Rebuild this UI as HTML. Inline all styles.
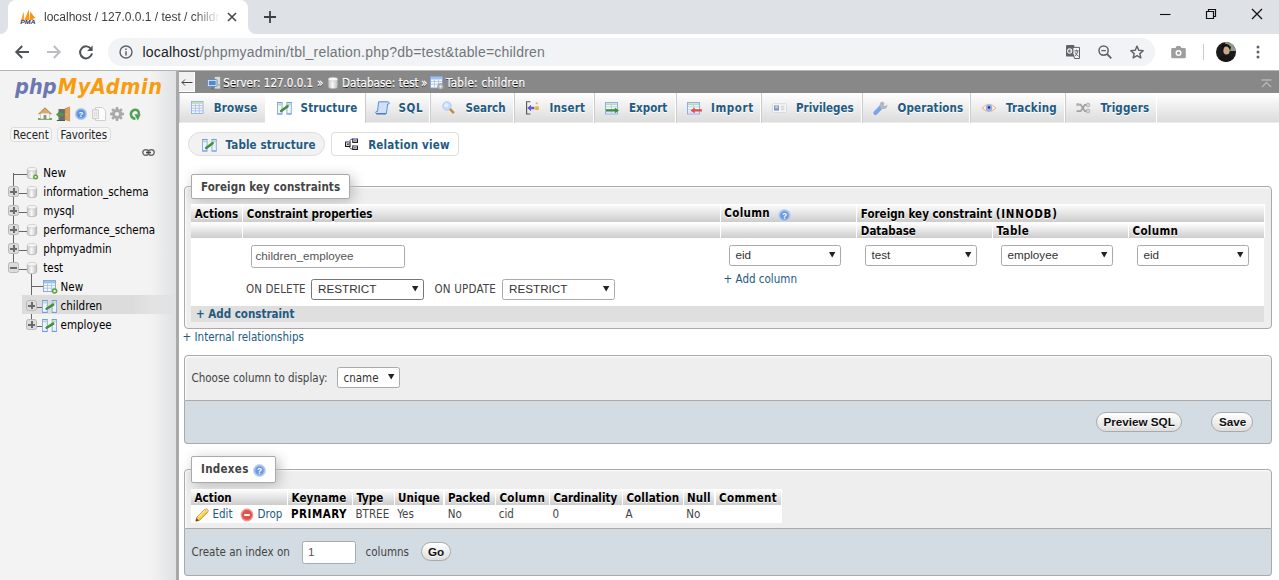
<!DOCTYPE html>
<html><head><meta charset="utf-8"><title>localhost / 127.0.0.1 / test / children | phpMyAdmin</title>
<style>
*{box-sizing:border-box}
html,body{margin:0;padding:0}
body{width:1279px;height:580px;overflow:hidden;position:relative;background:#fff;font-family:"DejaVu Sans Condensed","DejaVu Sans","Liberation Sans",sans-serif;font-size:11.5px;color:#444}
.a{position:absolute}
.t{position:absolute;white-space:nowrap;line-height:14px;height:14px}
.b{font-weight:bold}
.lk{color:#235a81}
.ar{font-family:"Liberation Sans",sans-serif;font-size:11.7px}
.ui{font-family:"Liberation Sans",sans-serif}
svg{position:absolute;overflow:visible}
/* chrome */
#strip{left:0;top:0;width:1279px;height:34px;background:#dee1e6}
#tab{left:8px;top:0;width:240px;height:34px;background:#fff;border-radius:8px 8px 0 0}
#bar{left:0;top:34px;width:1279px;height:36px;background:#fff}
#barline{left:0;top:70px;width:1279px;height:1px;background:#b4b4b4}
#pill{left:108px;top:38px;width:1047px;height:28px;border-radius:14px;background:#f1f3f4}
/* page */
#nav{left:0;top:71px;width:176px;height:509px;background:linear-gradient(90deg,#f3f3f3 0,#f3f3f3 150px,#dfe1e3 176px)}
#stripe{left:176px;top:71px;width:3px;height:509px;background:#a9a9a9}
#crumb{left:179px;top:71px;width:1100px;height:22px;background:#888}
#tabs{left:179px;top:93px;width:1100px;height:30px;background:linear-gradient(#fff,#dcdcdc 29px,#ededed 29px)}
.tb{position:absolute;top:93px;height:30px;border-right:1px solid #fff;border-left:1px solid #ccc}
.tbt{color:#235a81;font-weight:bold;text-shadow:0 1px 0 #fff}
.fs{position:absolute;background:#eee;border:1px solid #aaa;border-radius:4px;box-shadow:1px 1px 2px #fff inset}
.ft{position:absolute;background:#d3dce3;border:1px solid #aaa;border-top:0;border-radius:0 0 4px 4px}
.lg{position:absolute;background:#fff;border:1px solid #aaa;border-radius:2px;box-shadow:3px 3px 13px #bbb}
.th{position:absolute;background:linear-gradient(#fff,#ccc)}
.tht{color:#000;font-weight:bold;text-shadow:0 1px 0 #fff}
.sel{position:absolute;background:#fff;border:1px solid #aaa;border-radius:2.5px;height:21px}
.btn{position:absolute;border:1px solid #aaa;border-radius:11px;background:linear-gradient(#fff,#ddd);color:#111;font-weight:bold;text-shadow:0 1px 0 #fff}
</style></head>
<body>
<!-- ===== browser chrome ===== -->
<div id="strip" class="a"></div>
<div id="tab" class="a"></div>
<div id="bar" class="a"></div>
<div id="barline" class="a"></div>
<div id="pill" class="a"></div>
<!--CHROME--><svg style="left:0;top:26px" width="8" height="8"><path d="M0 8 A8 8 0 0 0 8 0 V8 Z" fill="#fff"/></svg>
<svg style="left:248px;top:26px" width="8" height="8"><path d="M8 8 A8 8 0 0 1 0 0 V8 Z" fill="#fff"/></svg>
<svg style="left:20px;top:9px" width="16" height="16" viewBox="0 0 16 16"><path d="M1 11 L3.6 2.5 L4.4 11 Z" fill="#f9a13a"/><path d="M4.6 11 L8.8 0.3 L9.6 11 Z" fill="#f89c0e"/><path d="M10 11 L10.2 2.2 C12 5 14 8 15.8 9 L13 9.4 L13.6 11 Z" fill="#f7901e"/><text x="0.2" y="15.3" font-family="Liberation Sans,sans-serif" font-size="5.6" font-weight="bold" font-style="italic" fill="#2b2f6e" textLength="15.4" lengthAdjust="spacingAndGlyphs">PMA</text></svg>
<div class="t ui" style="left:44px;top:10px;font-size:12px;color:#3c4043;width:176px;overflow:hidden;-webkit-mask-image:linear-gradient(90deg,#000 150px,transparent 176px);mask-image:linear-gradient(90deg,#000 150px,transparent 176px)">localhost / 127.0.0.1 / test / children | phpMyAdmin</div>
<svg style="left:226px;top:11px" width="12" height="12"><path d="M2 2 L10 10 M10 2 L2 10" stroke="#45474a" stroke-width="1.6" fill="none"/></svg>
<svg style="left:263px;top:10px" width="14" height="14"><path d="M7 1 V13 M1 7 H13" stroke="#3c4043" stroke-width="1.8" fill="none"/></svg>
<!-- window controls -->
<svg style="left:1160px;top:13px" width="11" height="3"><path d="M0 1.5 H10.5" stroke="#111" stroke-width="1.1"/></svg>
<svg style="left:1205px;top:8px" width="12" height="12"><path d="M1.5 3.5 H8.5 V10.5 H1.5 Z M3.5 3.5 V1.5 H10.5 V8.5 H8.5" stroke="#111" stroke-width="1.2" fill="none"/></svg>
<svg style="left:1251px;top:8px" width="12" height="12"><path d="M1 1 L11 11 M11 1 L1 11" stroke="#111" stroke-width="1.3" fill="none"/></svg>
<!-- nav buttons -->
<svg style="left:14px;top:44px" width="16" height="16"><path d="M15 8 H2.5 M8.2 2 L2.3 8 L8.2 14" stroke="#505458" stroke-width="2" fill="none"/></svg>
<svg style="left:46px;top:44px" width="16" height="16"><path d="M1 8 H13.5 M7.8 2 L13.7 8 L7.8 14" stroke="#bbbdc0" stroke-width="2" fill="none"/></svg>
<svg style="left:78px;top:44px" width="16" height="16"><path d="M13.2 5.2 A6 6 0 1 0 14 9.4" stroke="#505458" stroke-width="2" fill="none"/><path d="M14.6 1.6 V7 H9.2 Z" fill="#505458"/></svg>
<!-- info icon -->
<svg style="left:119px;top:45px" width="14" height="14"><circle cx="7" cy="7" r="6" stroke="#5f6368" stroke-width="1.4" fill="none"/><path d="M7 6.2 V10.4 M7 3.6 V5" stroke="#5f6368" stroke-width="1.5"/></svg>
<div class="t ui" style="left:142.5px;top:44px;font-size:14px;line-height:16px;height:16px;letter-spacing:0.21px;color:#72767b"><span style="color:#202124">localhost</span>/phpmyadmin/tbl_relation.php?db=test&amp;table=children</div>
<!-- right icons -->
<svg style="left:1066px;top:45px" width="14" height="14"><rect x="0" y="0" width="8.4" height="11.6" rx="1.2" fill="#5f6368"/><circle cx="3.7" cy="6" r="2.1" stroke="#eceef0" stroke-width="1.1" fill="none"/><path d="M3.7 6 H6.2" stroke="#eceef0" stroke-width="1"/><path d="M6.9 2.4 H13.5 V13.5 H8.6 L6.9 8.6 Z" fill="#f1f3f4" stroke="#5f6368" stroke-width="1"/><path d="M8.4 5.9 H12.5 M10.4 4.7 V5.9 M11.9 5.9 Q11 9.6 8.6 11.3 M9.2 7.4 Q10.4 10.2 12.6 11.3" stroke="#5f6368" stroke-width=".95" fill="none"/></svg>
<svg style="left:1098px;top:45px" width="14" height="14"><circle cx="5.6" cy="5.6" r="4.6" stroke="#5f6368" stroke-width="1.5" fill="none"/><path d="M9 9 L13.3 13.3" stroke="#5f6368" stroke-width="1.8"/><path d="M3.3 5.6 H7.9" stroke="#5f6368" stroke-width="1.3"/></svg>
<svg style="left:1129px;top:44px" width="16" height="16" viewBox="0 0 24 24"><path d="M12 3.2 L14.6 9.4 L21.3 10 L16.2 14.4 L17.8 21 L12 17.4 L6.2 21 L7.8 14.4 L2.7 10 L9.4 9.4 Z" stroke="#5f6368" stroke-width="2.1" fill="none" stroke-linejoin="round"/></svg>
<svg style="left:1171px;top:45px" width="15" height="14"><path d="M1.5 3 H4.5 L5.7 1 H9.3 L10.5 3 H13.5 Q14.8 3 14.8 4.3 V12 Q14.8 13.3 13.5 13.3 H1.5 Q0.2 13.3 0.2 12 V4.3 Q0.2 3 1.5 3 Z" fill="#9e9e9e"/><circle cx="7.5" cy="8" r="3" fill="#fff"/><circle cx="7.5" cy="8" r="1.6" fill="#9e9e9e"/></svg>
<div class="a" style="left:1203px;top:44px;width:1px;height:16px;background:#c8cacd"></div>
<svg style="left:1216px;top:42px" width="20" height="20"><defs><clipPath id="av"><circle cx="10" cy="10" r="10"/></clipPath></defs><g clip-path="url(#av)"><rect width="20" height="20" fill="#1d1b18"/><rect x="9" y="0" width="11" height="9" fill="#8c9a8f"/><ellipse cx="10.5" cy="8.5" rx="3.2" ry="4" fill="#c9a78c"/><path d="M5 4 Q10 -1 15 5 L14 9 Q13 4 10 4.5 Q7 4 7 10 Z" fill="#15120f"/><path d="M0 20 Q2 13 10 13.5 Q18 13 20 20 Z" fill="#161616"/></g></svg>
<svg style="left:1256px;top:45px" width="4" height="14"><circle cx="2" cy="2" r="1.5" fill="#5f6368"/><circle cx="2" cy="7" r="1.5" fill="#5f6368"/><circle cx="2" cy="12" r="1.5" fill="#5f6368"/></svg>
<!--/CHROME-->
<!-- ===== page ===== -->
<div id="nav" class="a"></div>
<div id="stripe" class="a"></div>
<div id="crumb" class="a"></div>
<div id="tabs" class="a"></div>
<!--NAV--><div class="t" style="left:15px;top:72.7px;font-size:21.5px;line-height:28px;height:28px;font-style:italic;font-weight:bold"><span style="color:#6c78af;letter-spacing:.1px">php</span><span style="color:#f89c0e;letter-spacing:.6px;margin-left:1px">MyAdmin</span></div>
<!-- nav icons -->
<svg style="left:38px;top:107px" width="14" height="13" viewBox="0 0 14 13"><path d="M0 11 H14 V13 H0 Z" fill="#6fb15a"/><path d="M2.5 6 H11.5 V12 H2.5 Z" fill="#f7f7f7" stroke="#b9b2a6" stroke-width=".6"/><path d="M5.6 8 H8.4 V12 H5.6 Z" fill="#8d8d8d"/><path d="M7 0.3 L14 7 L12.6 7.6 L7 2.6 L1.4 7.6 L0 7 Z" fill="#c18b4b"/><path d="M7 1.6 L12 6.2 H2 Z" fill="#d9a86c"/></svg>
<svg style="left:56px;top:107px" width="14" height="14" viewBox="0 0 14 14"><path d="M2.5 2 H9 V13 H2.5 Z" fill="#6d6d6d"/><path d="M0.8 13 H9 V14 H0.8 Z" fill="#555"/><path d="M9 1.6 L13.6 0 V14 L9 12.6 Z" fill="#d9a25c" stroke="#b97f3d" stroke-width=".6"/><circle cx="10.3" cy="7.6" r=".7" fill="#f4d27a"/><path d="M0 7.5 L3.8 4 V6 H7.5 V9 H3.8 V11 Z" fill="#4e9a4b"/></svg>
<svg style="left:75px;top:108px" width="12" height="12" viewBox="0 0 12 12"><circle cx="6" cy="6" r="5.7" fill="#8fb3e8" stroke="#bcd1f1" stroke-width=".9"/><circle cx="6" cy="6" r="3.9" fill="#5e8fd8"/><text x="3.6" y="8.9" font-family="Liberation Sans,sans-serif" font-size="8" font-weight="bold" fill="#fff">?</text></svg>
<svg style="left:92px;top:107px" width="14" height="14" viewBox="0 0 14 14"><path d="M3.5 0.5 H10.5 L13.5 3.5 V13.5 H3.5 Z" fill="#fcfcfc" stroke="#c9c9c9" stroke-width=".9"/><path d="M0.6 2.8 H6.4 V11.6 H0.6 Z" fill="#f4f4f4" stroke="#c4c4c4" stroke-width=".9"/><path d="M2.6 4.5 V10 M4.3 4.5 V10" stroke="#d2d2d2" stroke-width=".8"/></svg>
<svg style="left:110px;top:107px" width="14" height="14" viewBox="0 0 14 14"><g fill="#a9a9a9"><circle cx="7" cy="7" r="4.9"/><g id="gt"><rect x="5.6" y="0" width="2.8" height="14" rx=".8"/></g><use href="#gt" transform="rotate(45 7 7)"/><use href="#gt" transform="rotate(90 7 7)"/><use href="#gt" transform="rotate(135 7 7)"/></g><circle cx="7" cy="7" r="2.1" fill="#f0f0f0"/></svg>
<svg style="left:129px;top:108px" width="12" height="13" viewBox="0 0 12 13"><path d="M8.8 2.6 A4.4 4.4 0 1 0 6.4 10.6" stroke="#4fa052" stroke-width="2.6" fill="none"/><path d="M5.4 6.2 H11.8 L8.8 12.6 Z" fill="#4fa052"/><path d="M8.6 2.4 Q10.4 4 9.6 6.4" stroke="#4fa052" stroke-width="2.4" fill="none"/></svg>
<!-- recent / favorites -->
<div class="a" style="left:9.5px;top:127px;width:42.5px;height:15px;border:1px solid #ddd;border-radius:4px;background:#f6f6f6"></div>
<div class="a" style="left:56.5px;top:127px;width:54px;height:15px;border:1px solid #ddd;border-radius:4px;background:#f6f6f6"></div>
<div class="t" style="left:13px;top:128px;color:#222">Recent</div>
<div class="t" style="left:60.5px;top:128px;color:#222">Favorites</div>
<!-- link icon -->
<svg style="left:142px;top:149px" width="13" height="7" viewBox="0 0 13 7"><rect x=".8" y=".8" width="6" height="5.4" rx="2.7" fill="none" stroke="#6a6a6a" stroke-width="1.4"/><rect x="6.2" y=".8" width="6" height="5.4" rx="2.7" fill="none" stroke="#6a6a6a" stroke-width="1.4"/><path d="M4 3.5 H9" stroke="#444" stroke-width="1.5"/></svg>
<!-- tree lines -->
<div class="a" style="left:13px;top:173px;width:1px;height:95px;background:#666"></div>
<div class="a" style="left:13px;top:174px;width:14px;height:1px;background:#666"></div>
<div class="a" style="left:31px;top:273px;width:1px;height:52px;background:#666"></div>
<div class="a" style="left:31px;top:286px;width:12px;height:1px;background:#666"></div>
<div class="a" style="left:22px;top:295px;width:151px;height:19px;background:linear-gradient(90deg,#dcdcdc,#dcdcdc 110px,rgba(220,220,220,.35))"></div>
<svg style="left:27px;top:167px" width="10" height="12" viewBox="0 0 10 12"><defs><linearGradient id="cy" x1="0" x2="1"><stop offset="0" stop-color="#c6c6c6"/><stop offset=".45" stop-color="#f8f8f8"/><stop offset="1" stop-color="#bcbcbc"/></linearGradient></defs><path d="M0.4 2.2 V9.8 A4.6 1.9 0 0 0 9.6 9.8 V2.2 Z" fill="url(#cy)" stroke="#adadad" stroke-width=".7"/><ellipse cx="5" cy="2.2" rx="4.6" ry="1.9" fill="#f4f4f4" stroke="#bdbdbd" stroke-width=".6"/><circle cx="8.6" cy="10" r="2.5" fill="#5da13a"/><circle cx="8.6" cy="10" r="1.1" fill="#e9f6d8"/></svg>
<div class="t" style="left:43.3px;top:165.5px;color:#000">New</div>
<div class="a" style="left:8px;top:186px;width:11px;height:11px;background:#dcdcdc;border:1px solid #b8b8b8;border-radius:2.5px"></div><div class="a" style="left:10px;top:190.5px;width:7px;height:2px;background:#6a6a6a"></div><div class="a" style="left:12.5px;top:188px;width:2px;height:7px;background:#6a6a6a"></div>
<div class="a" style="left:19px;top:193px;width:8px;height:1px;background:#666"></div>
<svg style="left:27px;top:186px" width="10" height="12" viewBox="0 0 10 12"><defs><linearGradient id="cy" x1="0" x2="1"><stop offset="0" stop-color="#c6c6c6"/><stop offset=".45" stop-color="#f8f8f8"/><stop offset="1" stop-color="#bcbcbc"/></linearGradient></defs><path d="M0.4 2.2 V9.8 A4.6 1.9 0 0 0 9.6 9.8 V2.2 Z" fill="url(#cy)" stroke="#adadad" stroke-width=".7"/><ellipse cx="5" cy="2.2" rx="4.6" ry="1.9" fill="#f4f4f4" stroke="#bdbdbd" stroke-width=".6"/></svg>
<div class="t" style="left:43.3px;top:184.5px;color:#000">information_schema</div>
<div class="a" style="left:8px;top:205px;width:11px;height:11px;background:#dcdcdc;border:1px solid #b8b8b8;border-radius:2.5px"></div><div class="a" style="left:10px;top:209.5px;width:7px;height:2px;background:#6a6a6a"></div><div class="a" style="left:12.5px;top:207px;width:2px;height:7px;background:#6a6a6a"></div>
<div class="a" style="left:19px;top:212px;width:8px;height:1px;background:#666"></div>
<svg style="left:27px;top:205px" width="10" height="12" viewBox="0 0 10 12"><defs><linearGradient id="cy" x1="0" x2="1"><stop offset="0" stop-color="#c6c6c6"/><stop offset=".45" stop-color="#f8f8f8"/><stop offset="1" stop-color="#bcbcbc"/></linearGradient></defs><path d="M0.4 2.2 V9.8 A4.6 1.9 0 0 0 9.6 9.8 V2.2 Z" fill="url(#cy)" stroke="#adadad" stroke-width=".7"/><ellipse cx="5" cy="2.2" rx="4.6" ry="1.9" fill="#f4f4f4" stroke="#bdbdbd" stroke-width=".6"/></svg>
<div class="t" style="left:43.3px;top:203.5px;color:#000">mysql</div>
<div class="a" style="left:8px;top:224px;width:11px;height:11px;background:#dcdcdc;border:1px solid #b8b8b8;border-radius:2.5px"></div><div class="a" style="left:10px;top:228.5px;width:7px;height:2px;background:#6a6a6a"></div><div class="a" style="left:12.5px;top:226px;width:2px;height:7px;background:#6a6a6a"></div>
<div class="a" style="left:19px;top:231px;width:8px;height:1px;background:#666"></div>
<svg style="left:27px;top:224px" width="10" height="12" viewBox="0 0 10 12"><defs><linearGradient id="cy" x1="0" x2="1"><stop offset="0" stop-color="#c6c6c6"/><stop offset=".45" stop-color="#f8f8f8"/><stop offset="1" stop-color="#bcbcbc"/></linearGradient></defs><path d="M0.4 2.2 V9.8 A4.6 1.9 0 0 0 9.6 9.8 V2.2 Z" fill="url(#cy)" stroke="#adadad" stroke-width=".7"/><ellipse cx="5" cy="2.2" rx="4.6" ry="1.9" fill="#f4f4f4" stroke="#bdbdbd" stroke-width=".6"/></svg>
<div class="t" style="left:43.3px;top:222.5px;color:#000">performance_schema</div>
<div class="a" style="left:8px;top:243px;width:11px;height:11px;background:#dcdcdc;border:1px solid #b8b8b8;border-radius:2.5px"></div><div class="a" style="left:10px;top:247.5px;width:7px;height:2px;background:#6a6a6a"></div><div class="a" style="left:12.5px;top:245px;width:2px;height:7px;background:#6a6a6a"></div>
<div class="a" style="left:19px;top:250px;width:8px;height:1px;background:#666"></div>
<svg style="left:27px;top:243px" width="10" height="12" viewBox="0 0 10 12"><defs><linearGradient id="cy" x1="0" x2="1"><stop offset="0" stop-color="#c6c6c6"/><stop offset=".45" stop-color="#f8f8f8"/><stop offset="1" stop-color="#bcbcbc"/></linearGradient></defs><path d="M0.4 2.2 V9.8 A4.6 1.9 0 0 0 9.6 9.8 V2.2 Z" fill="url(#cy)" stroke="#adadad" stroke-width=".7"/><ellipse cx="5" cy="2.2" rx="4.6" ry="1.9" fill="#f4f4f4" stroke="#bdbdbd" stroke-width=".6"/></svg>
<div class="t" style="left:43.3px;top:241.5px;color:#000">phpmyadmin</div>
<div class="a" style="left:8px;top:262px;width:11px;height:11px;background:#dcdcdc;border:1px solid #b8b8b8;border-radius:2.5px"></div><div class="a" style="left:10px;top:266.5px;width:7px;height:2px;background:#6a6a6a"></div>
<div class="a" style="left:19px;top:269px;width:8px;height:1px;background:#666"></div>
<svg style="left:27px;top:262px" width="10" height="12" viewBox="0 0 10 12"><defs><linearGradient id="cy" x1="0" x2="1"><stop offset="0" stop-color="#c6c6c6"/><stop offset=".45" stop-color="#f8f8f8"/><stop offset="1" stop-color="#bcbcbc"/></linearGradient></defs><path d="M0.4 2.2 V9.8 A4.6 1.9 0 0 0 9.6 9.8 V2.2 Z" fill="url(#cy)" stroke="#adadad" stroke-width=".7"/><ellipse cx="5" cy="2.2" rx="4.6" ry="1.9" fill="#f4f4f4" stroke="#bdbdbd" stroke-width=".6"/></svg>
<div class="t" style="left:43.3px;top:260.5px;color:#000">test</div>
<svg style="left:43px;top:280px" width="15" height="14" viewBox="0 0 15 14"><rect x=".5" y=".5" width="12" height="11" fill="#f4f8fd" stroke="#7fa3dd" stroke-width=".9"/><path d="M1 2.2 H12" stroke="#9fc1ee" stroke-width="2.4"/><path d="M1 5.5 H12 M1 8.2 H12 M4.5 3.5 V11 M8.5 3.5 V11" stroke="#a9c0e6" stroke-width=".8"/><circle cx="11.6" cy="11" r="2.8" fill="#5da13a"/><circle cx="11.6" cy="11" r="1.2" fill="#e9f6d8"/></svg>
<div class="t" style="left:60.6px;top:279.5px;color:#000">New</div>
<div class="a" style="left:26px;top:300px;width:11px;height:11px;background:#dcdcdc;border:1px solid #b8b8b8;border-radius:2.5px"></div><div class="a" style="left:28px;top:304.5px;width:7px;height:2px;background:#6a6a6a"></div><div class="a" style="left:30.5px;top:302px;width:2px;height:7px;background:#6a6a6a"></div>
<div class="a" style="left:37px;top:306.5px;width:5px;height:1px;background:#666"></div>
<svg style="left:42px;top:299.5px" width="15" height="13" viewBox="0 0 15 13"><rect x=".5" y=".5" width="4.8" height="12" fill="#e6eefb" stroke="#86a9e2" stroke-width=".9"/><rect x="10.1" y=".5" width="4.4" height="12" fill="#e6eefb" stroke="#86a9e2" stroke-width=".9"/><path d="M.4 .6 H5.4 M10 .6 H14.6 M.4 12.4 H5.4 M10 12.4 H14.6" stroke="#6b98dc" stroke-width=".9"/><path d="M1.2 2.4 H4.6 M10.8 2.4 H13.8" stroke="#b4dc9c" stroke-width="1.5"/><path d="M1.4 5 H4.4 M1.4 7.5 H4.4 M1.4 10 H4.4 M11 5 H13.6 M11 7.5 H13.6 M11 10 H13.6" stroke="#fff" stroke-width=".9"/><path d="M4.6 8.8 L11.2 4.6" stroke="#3f9038" stroke-width="2.5" stroke-linecap="round"/></svg>
<div class="t" style="left:60.6px;top:298.5px;color:#000">children</div>
<div class="a" style="left:26px;top:319px;width:11px;height:11px;background:#dcdcdc;border:1px solid #b8b8b8;border-radius:2.5px"></div><div class="a" style="left:28px;top:323.5px;width:7px;height:2px;background:#6a6a6a"></div><div class="a" style="left:30.5px;top:321px;width:2px;height:7px;background:#6a6a6a"></div>
<div class="a" style="left:37px;top:325.5px;width:5px;height:1px;background:#666"></div>
<svg style="left:42px;top:318.5px" width="15" height="13" viewBox="0 0 15 13"><rect x=".5" y=".5" width="4.8" height="12" fill="#e6eefb" stroke="#86a9e2" stroke-width=".9"/><rect x="10.1" y=".5" width="4.4" height="12" fill="#e6eefb" stroke="#86a9e2" stroke-width=".9"/><path d="M.4 .6 H5.4 M10 .6 H14.6 M.4 12.4 H5.4 M10 12.4 H14.6" stroke="#6b98dc" stroke-width=".9"/><path d="M1.2 2.4 H4.6 M10.8 2.4 H13.8" stroke="#b4dc9c" stroke-width="1.5"/><path d="M1.4 5 H4.4 M1.4 7.5 H4.4 M1.4 10 H4.4 M11 5 H13.6 M11 7.5 H13.6 M11 10 H13.6" stroke="#fff" stroke-width=".9"/><path d="M4.6 8.8 L11.2 4.6" stroke="#3f9038" stroke-width="2.5" stroke-linecap="round"/></svg>
<div class="t" style="left:60.6px;top:317.5px;color:#000">employee</div>
<!--/NAV-->
<!--TOP--><div class="a" style="left:179px;top:72px;width:16px;height:20px;background:#f0f0f0;border-right:1px solid #fff;border-bottom:1px solid #fff"></div>
<svg style="left:181px;top:78px" width="12" height="9"><path d="M0.8 4.5 H11.5 M4 1.5 L1 4.5 L4 7.5" stroke="#444" stroke-width="1" fill="none"/></svg>
<svg style="left:1261px;top:79px" width="11" height="9"><path d="M0.5 1 H10.5 M1 8 L5.5 3.6 L10 8" stroke="#b5b5b5" stroke-width="1.4" fill="none"/></svg>
<svg style="left:207px;top:76px" width="14" height="14" viewBox="0 0 14 14"><rect x="7.5" y="0.5" width="6" height="12.5" fill="#d8d8d8" stroke="#8e8e8e" stroke-width=".8"/><circle cx="12" cy="9" r=".8" fill="#5cb85c"/><rect x=".5" y="3.5" width="9.5" height="7" rx=".8" fill="#dfe9f7" stroke="#6c86b5" stroke-width=".9"/><rect x="1.8" y="4.8" width="6.9" height="4.4" fill="#4f8ad6"/><path d="M3.6 12.8 H7 M5.3 10.5 V12.8" stroke="#777" stroke-width="1.2"/></svg>
<div class="t" style="left:223.3px;top:75.5px;color:#fff;text-shadow:0 1px 0 #000;-webkit-text-stroke:.25px #fff">Server: 127.0.0.1</div>
<div class="t" style="left:317px;top:75.5px;color:#fff;text-shadow:0 1px 0 #000;-webkit-text-stroke:.25px #fff">»</div>
<svg style="left:328px;top:77px" width="10" height="12" viewBox="0 0 10 12"><path d="M0.4 2.2 V9.8 A4.6 1.9 0 0 0 9.6 9.8 V2.2 Z" fill="url(#cy)" stroke="#aaa" stroke-width=".6"/><ellipse cx="5" cy="2.2" rx="4.6" ry="1.9" fill="#f8f8f8" stroke="#bbb" stroke-width=".6"/></svg>
<div class="t" style="left:342px;top:75.5px;color:#fff;text-shadow:0 1px 0 #000;-webkit-text-stroke:.25px #fff;letter-spacing:.05px">Database: test</div>
<div class="t" style="left:421px;top:75.5px;color:#fff;text-shadow:0 1px 0 #000;-webkit-text-stroke:.25px #fff">»</div>
<svg style="left:430px;top:76px" width="14" height="14" viewBox="0 0 14 14"><rect x=".5" y=".5" width="12" height="11.5" fill="#f4f8fd" stroke="#7fa3dd" stroke-width=".9"/><path d="M1 2.2 H12" stroke="#9fc1ee" stroke-width="2.4"/><path d="M1 5.5 H12 M1 8.2 H12 M4.5 3.5 V11 M8.5 3.5 V11" stroke="#a9c0e6" stroke-width=".8"/><circle cx="10.6" cy="10.6" r="3" fill="#bdbdbd" stroke="#8a8a8a" stroke-width=".7"/><circle cx="10.6" cy="10.6" r="1" fill="#f2f2f2"/></svg>
<div class="t" style="left:446px;top:75.5px;color:#fff;text-shadow:0 1px 0 #000;-webkit-text-stroke:.25px #fff;letter-spacing:.3px">Table: children</div>
<div class="tb" style="left:179px;width:86px; border-right:0;"></div>
<svg style="left:191px;top:101px" width="15" height="14" viewBox="0 0 15 14"><rect x=".5" y=".5" width="11.5" height="12" fill="#f4f8fd" stroke="#8fb0e4" stroke-width=".9"/><path d="M1 2 H11.5" stroke="#b7dba0" stroke-width="1.6"/><path d="M1 4.6 H11.5 M1 7.2 H11.5 M1 9.8 H11.5 M4.4 3 V12 M8.2 3 V12" stroke="#a9c0e6" stroke-width=".9"/></svg>
<div class="t tbt" style="left:213.8px;top:100.5px;letter-spacing:0.12px">Browse</div>
<div class="tb" style="left:265px;width:100px; background:#fff;height:30px;border-left-color:#fff;"></div>
<svg style="left:277px;top:101px" width="15" height="14" viewBox="0 0 15 14"><rect x=".5" y="1.5" width="4.6" height="11.5" fill="#e6eefb" stroke="#86a9e2" stroke-width=".9"/><rect x="9.9" y="1.5" width="4.4" height="11.5" fill="#e6eefb" stroke="#86a9e2" stroke-width=".9"/><path d="M.4 1.6 H5.2 M9.8 1.6 H14.4 M.4 13 H5.2 M9.8 13 H14.4" stroke="#6b98dc" stroke-width=".9"/><path d="M1.2 3.4 H4.4 M10.6 3.4 H13.6" stroke="#b4dc9c" stroke-width="1.5"/><path d="M1.4 6 H4.2 M1.4 8.4 H4.2 M1.4 10.8 H4.2 M10.8 6 H13.4 M10.8 8.4 H13.4 M10.8 10.8 H13.4" stroke="#fff" stroke-width=".9"/><path d="M4.2 10 L10.6 5.2" stroke="#3f9038" stroke-width="2.6" stroke-linecap="round"/></svg>
<div class="t tbt" style="left:300.6px;top:100.5px;letter-spacing:0.14px">Structure</div>
<div class="tb" style="left:365px;width:65px;"></div>
<svg style="left:375px;top:101px" width="15" height="14" viewBox="0 0 15 14"><path d="M3.6 .8 H13.4 Q14.6 1.2 14 3 H12.6 Q12.2 7 11.4 12.6 H1.2 Q.2 12 1 10.6 H2.4 Q3.2 6 3.6 .8 Z" fill="#cfe0f7" stroke="#5b8ed6" stroke-width="1"/><path d="M1.4 12.9 H11" stroke="#3f6fbd" stroke-width="1.1"/></svg>
<div class="t tbt" style="left:398.5px;top:100.5px;letter-spacing:0.6px">SQL</div>
<div class="tb" style="left:430px;width:84px;"></div>
<svg style="left:442px;top:101px" width="15" height="14" viewBox="0 0 15 14"><circle cx="5" cy="5" r="4.2" fill="#c6ddf8" stroke="#b4cdee" stroke-width="1"/><circle cx="4.4" cy="4.2" r="2" fill="#e3effc"/><path d="M8.6 8.6 L11.2 11.4" stroke="#c78a45" stroke-width="2.6" stroke-linecap="round"/></svg>
<div class="t tbt" style="left:465.5px;top:100.5px;letter-spacing:0px">Search</div>
<div class="tb" style="left:514px;width:80px;"></div>
<svg style="left:525px;top:101px" width="15" height="14" viewBox="0 0 15 14"><path d="M1 .8 H5.4 M1 13 H5.4 M1.6 .8 V13" stroke="#555" stroke-width="1.1" fill="none"/><path d="M2.2 7 L6 3.8 V5.8 H9.4 V8.2 H6 V10.2 Z" fill="#6a5acd"/><rect x="10.2" y="5.4" width="3.6" height="3.6" fill="#e8b33a"/><rect x="10.8" y="1.4" width="1.8" height="1.8" fill="#e8b33a"/></svg>
<div class="t tbt" style="left:549.5px;top:100.5px;letter-spacing:0.2px">Insert</div>
<div class="tb" style="left:594px;width:82px;"></div>
<svg style="left:605px;top:101px" width="15" height="14" viewBox="0 0 15 14"><rect x=".5" y="1.5" width="12" height="11.5" fill="#f4f8fd" stroke="#86a9e2" stroke-width=".9"/><path d="M1 3.2 H12" stroke="#b9dca6" stroke-width="1.8"/><path d="M1 5.8 H12 M1 8.6 H12 M1 11 H12 M6.5 4 V12.5" stroke="#b4c8ea" stroke-width=".8"/><path d="M1 8.2 H9.8 V6.6 L14 9.4 L9.8 12.2 V10.6 H1 Z" fill="#3f8f3a"/></svg>
<div class="t tbt" style="left:629px;top:100.5px;letter-spacing:0px">Export</div>
<div class="tb" style="left:676px;width:85px;"></div>
<svg style="left:687px;top:101px" width="15" height="14" viewBox="0 0 15 14"><rect x=".5" y="1.5" width="12" height="11.5" fill="#f4f8fd" stroke="#86a9e2" stroke-width=".9"/><path d="M1 3.2 H12" stroke="#b9dca6" stroke-width="1.8"/><path d="M1 5.8 H12 M1 8.6 H12 M1 11 H12 M6.5 4 V12.5" stroke="#b4c8ea" stroke-width=".8"/><path d="M15 8.2 H7.8 V6.6 L3.4 9.4 L7.8 12.2 V10.6 H15 Z" fill="#e84c42"/></svg>
<div class="t tbt" style="left:711px;top:100.5px;letter-spacing:0.6px">Import</div>
<div class="tb" style="left:761px;width:101px;"></div>
<svg style="left:772px;top:101px" width="15" height="14" viewBox="0 0 15 14"><rect x=".5" y="2.8" width="14" height="8.6" rx="1" fill="#fafafa" stroke="#d6d6d6" stroke-width=".9"/><rect x="2" y="4.4" width="5" height="5.2" fill="#6e9be0"/><circle cx="4.5" cy="6.2" r="1.4" fill="#f0c79a"/><path d="M8.6 5.2 H12.6 M8.6 7 H12.6 M8.6 8.8 H12.6" stroke="#c4c4c4" stroke-width=".9"/></svg>
<div class="t tbt" style="left:796px;top:100.5px;letter-spacing:0px">Privileges</div>
<div class="tb" style="left:862px;width:108px;"></div>
<svg style="left:872.5px;top:101px" width="15" height="14" viewBox="0 0 15 14"><path d="M2.4 12 L8.4 5.8" stroke="#7aa6e8" stroke-width="4.2" stroke-linecap="round"/><path d="M14.2 3.4 A3.8 3.8 0 1 1 10 .4 L11.6 2.8 L10.4 4.6 L12 5 Z" fill="#b4b7bd"/></svg>
<div class="t tbt" style="left:897.5px;top:100.5px;letter-spacing:0.15px">Operations</div>
<div class="tb" style="left:970px;width:95px;"></div>
<svg style="left:982px;top:101px" width="15" height="14" viewBox="0 0 15 14"><path d="M.4 7 Q7 -0.2 13.6 7 Q7 14.2 .4 7 Z" fill="#fff" stroke="#ecc3a4" stroke-width="1.2"/><circle cx="7" cy="7" r="3.4" fill="#8fb0ee"/><circle cx="7" cy="6.4" r="1.2" fill="#1b2a66"/></svg>
<div class="t tbt" style="left:1006px;top:100.5px;letter-spacing:0.2px">Tracking</div>
<div class="tb" style="left:1065px;width:92px;"></div>
<svg style="left:1076px;top:101px" width="15" height="14" viewBox="0 0 15 14"><path d="M.6 3.6 H4.6 L8.8 10 H12 M.6 10.2 H4.6 L8.8 4 H12" stroke="#a3a3a3" stroke-width="1.8" fill="none"/><circle cx="1.8" cy="3.6" r="1.6" fill="#b5b5b5"/><circle cx="12" cy="10" r="1.9" fill="#d4d4d4" stroke="#a3a3a3" stroke-width=".7"/><circle cx="12" cy="4" r="1.9" fill="#d4d4d4" stroke="#a3a3a3" stroke-width=".7"/></svg>
<div class="t tbt" style="left:1100.4px;top:100.5px;letter-spacing:0.17px">Triggers</div>
<div class="a" style="left:188px;top:132px;width:137px;height:24px;border:1px solid #ddd;border-radius:12px;background:#f2f2f2"></div>
<div class="a" style="left:331px;top:132px;width:128px;height:24px;border:1px solid #ddd;border-radius:4px;background:#fff"></div>
<svg style="left:202px;top:138px" width="15" height="14" viewBox="0 0 15 14"><rect x=".5" y="1.5" width="4.6" height="11.5" fill="#e6eefb" stroke="#86a9e2" stroke-width=".9"/><rect x="9.9" y="1.5" width="4.4" height="11.5" fill="#e6eefb" stroke="#86a9e2" stroke-width=".9"/><path d="M.4 1.6 H5.2 M9.8 1.6 H14.4 M.4 13 H5.2 M9.8 13 H14.4" stroke="#6b98dc" stroke-width=".9"/><path d="M1.2 3.4 H4.4 M10.6 3.4 H13.6" stroke="#b4dc9c" stroke-width="1.5"/><path d="M1.4 6 H4.2 M1.4 8.4 H4.2 M1.4 10.8 H4.2 M10.8 6 H13.4 M10.8 8.4 H13.4 M10.8 10.8 H13.4" stroke="#fff" stroke-width=".9"/><path d="M4.2 10 L10.6 5.2" stroke="#3f9038" stroke-width="2.6" stroke-linecap="round"/></svg>
<div class="t tbt" style="left:225.6px;top:137.5px;letter-spacing:.12px">Table structure</div>
<svg style="left:345px;top:138px" width="13" height="12" viewBox="0 0 13 12"><path d="M4 3.8 Q5.4 .8 8 .8 M4 8.6 Q5.4 11.4 8 11.4" stroke="#444" stroke-width=".9" fill="none"/><rect x=".6" y="3.8" width="4.4" height="4.6" fill="#fff" stroke="#111" stroke-width="1.1"/><path d="M0 3.6 H5.6" stroke="#8d8fdc" stroke-width="1.2"/><path d="M2 6.2 H3.8" stroke="#111" stroke-width="1.2"/><rect x="7.8" y=".8" width="4.6" height="3.6" fill="#fff" stroke="#111" stroke-width="1.1"/><path d="M7.2 .6 H13" stroke="#8d8fdc" stroke-width="1.2"/><path d="M9 2.8 H11.4" stroke="#555" stroke-width="1"/><rect x="7.8" y="7.8" width="4.6" height="3.6" fill="#fff" stroke="#111" stroke-width="1.1"/><path d="M7.2 7.6 H13" stroke="#8d8fdc" stroke-width="1.2"/><path d="M9 9.8 H11.4" stroke="#555" stroke-width="1"/></svg>
<div class="t tbt" style="left:368.2px;top:137.5px;letter-spacing:.2px">Relation view</div><!--/TOP-->
<!--MAIN--><div class="fs" style="left:184px;top:186px;width:1088px;height:143px"></div>
<div class="lg" style="left:191px;top:174px;width:159px;height:25px"></div>
<div class="t b" style="left:201px;top:179.8px;color:#444;letter-spacing:.07px">Foreign key constraints</div>
<div class="a" style="left:191px;top:204px;width:1074px;height:34px;background:#fff"></div>
<div class="th" style="left:191px;top:204px;width:51px;height:18px"></div>
<div class="th" style="left:243px;top:204px;width:477px;height:18px"></div>
<div class="th" style="left:721px;top:204px;width:135px;height:18px"></div>
<div class="th" style="left:857px;top:204px;width:407px;height:18px"></div>
<div class="th" style="left:191px;top:222.5px;width:51px;height:15.5px"></div>
<div class="th" style="left:243px;top:222.5px;width:477px;height:15.5px"></div>
<div class="th" style="left:721px;top:222.5px;width:135px;height:15.5px"></div>
<div class="th" style="left:857px;top:222.5px;width:135px;height:15.5px"></div>
<div class="th" style="left:993px;top:222.5px;width:135px;height:15.5px"></div>
<div class="th" style="left:1129px;top:222.5px;width:135px;height:15.5px"></div>
<div class="a" style="left:191px;top:238px;width:1073px;height:68px;background:#fff"></div>
<div class="a" style="left:191px;top:306px;width:1073px;height:16px;background:#dfdfdf"></div>
<div class="t tht" style="left:194.8px;top:206.8px">Actions</div>
<div class="t tht" style="left:246.8px;top:206.8px">Constraint properties</div>
<div class="t tht" style="left:724.3px;top:206px;letter-spacing:.33px">Column</div>
<svg style="left:777.5px;top:208.5px" width="13" height="13" viewBox="0 0 12 12"><circle cx="6" cy="6" r="5.6" fill="#a4c0ec" stroke="#c6d8f3" stroke-width=".9"/><circle cx="6" cy="6" r="3.9" fill="#6c99dd"/><text x="3.7" y="8.8" font-family="Liberation Sans,sans-serif" font-size="7.6" font-weight="bold" fill="#fff">?</text></svg>
<div class="t tht" style="left:860.8px;top:206.8px">Foreign key constraint <span style="letter-spacing:.75px">(INNODB)</span></div>
<div class="t tht" style="left:860.8px;top:223.6px">Database</div>
<div class="t tht" style="left:996.6px;top:223.6px;letter-spacing:.4px">Table</div>
<div class="t tht" style="left:1132.5px;top:223.6px;letter-spacing:.33px">Column</div>
<div class="sel" style="left:251px;top:245px;width:154px;height:23px"></div>
<div class="t ar" style="left:255.5px;top:249.4px;color:#555">children_employee</div>
<div class="t" style="left:246px;top:281.5px;letter-spacing:.1px">ON DELETE</div>
<div class="sel" style="left:311px;top:279px;width:113px;border-color:#767676"></div><div class="t ar" style="left:318px;top:282px;color:#333">RESTRICT</div><svg style="left:412.2px;top:286px" width="6.4" height="5.6" preserveAspectRatio="none" viewBox="0 0 64 64"><path d="M0 0 H64 L32 64 Z" fill="#222"/></svg>
<div class="t" style="left:434.5px;top:281.5px;letter-spacing:.2px">ON UPDATE</div>
<div class="sel" style="left:502px;top:279px;width:113px;border-color:#aaa"></div><div class="t ar" style="left:509px;top:282px;color:#333">RESTRICT</div><svg style="left:603.2px;top:286px" width="6.4" height="5.6" preserveAspectRatio="none" viewBox="0 0 64 64"><path d="M0 0 H64 L32 64 Z" fill="#222"/></svg>
<div class="sel" style="left:729px;top:245px;width:112px;border-color:#aaa"></div><div class="t ar" style="left:735.5px;top:248px;color:#333">eid</div><svg style="left:829.2px;top:252px" width="6.4" height="5.6" preserveAspectRatio="none" viewBox="0 0 64 64"><path d="M0 0 H64 L32 64 Z" fill="#222"/></svg>
<div class="sel" style="left:865px;top:245px;width:112px;border-color:#aaa"></div><div class="t ar" style="left:871.5px;top:248px;color:#333">test</div><svg style="left:965.2px;top:252px" width="6.4" height="5.6" preserveAspectRatio="none" viewBox="0 0 64 64"><path d="M0 0 H64 L32 64 Z" fill="#222"/></svg>
<div class="sel" style="left:1001px;top:245px;width:112px;border-color:#aaa"></div><div class="t ar" style="left:1007.5px;top:248px;color:#333">employee</div><svg style="left:1101.2px;top:252px" width="6.4" height="5.6" preserveAspectRatio="none" viewBox="0 0 64 64"><path d="M0 0 H64 L32 64 Z" fill="#222"/></svg>
<div class="sel" style="left:1137px;top:245px;width:112px;border-color:#aaa"></div><div class="t ar" style="left:1143.5px;top:248px;color:#333">eid</div><svg style="left:1237.2px;top:252px" width="6.4" height="5.6" preserveAspectRatio="none" viewBox="0 0 64 64"><path d="M0 0 H64 L32 64 Z" fill="#222"/></svg>
<div class="t lk" style="left:723.6px;top:271.5px">+ Add column</div>
<div class="t lk b" style="left:196px;top:307.2px">+ Add constraint</div>
<div class="t lk" style="left:182.6px;top:329.7px">+ Internal relationships</div>
<div class="fs" style="left:184px;top:355px;width:1088px;height:46px;border-radius:4px 4px 0 0"></div>
<div class="ft" style="left:184px;top:401px;width:1088px;height:43px"></div>
<div class="t" style="left:191.5px;top:371px">Choose column to display:</div>
<div class="sel" style="left:337px;top:367px;width:62.5px;border-color:#aaa"></div><div class="t " style="left:343.5px;top:371px;color:#333">cname</div><svg style="left:387.7px;top:374px" width="6.4" height="5.6" preserveAspectRatio="none" viewBox="0 0 64 64"><path d="M0 0 H64 L32 64 Z" fill="#222"/></svg>
<div class="btn" style="left:1096.3px;top:412.3px;width:85.5px;height:19.5px"></div>
<div class="t ar b" style="left:1103.4px;top:415px;color:#111;text-shadow:0 1px 0 #fff">Preview SQL</div>
<div class="btn" style="left:1211.2px;top:412.3px;width:42px;height:19.5px"></div>
<div class="t ar b" style="left:1219px;top:415px;color:#111;text-shadow:0 1px 0 #fff">Save</div>
<div class="fs" style="left:184px;top:469px;width:1088px;height:60px;border-radius:4px 4px 0 0"></div>
<div class="ft" style="left:184px;top:529px;width:1088px;height:47px"></div>
<div class="lg" style="left:191px;top:456px;width:84.5px;height:27px"></div>
<div class="t b" style="left:201px;top:461.6px;color:#444;letter-spacing:.3px">Indexes</div>
<svg style="left:252.6px;top:463.6px" width="13" height="13" viewBox="0 0 12 12"><circle cx="6" cy="6" r="5.6" fill="#a4c0ec" stroke="#c6d8f3" stroke-width=".9"/><circle cx="6" cy="6" r="3.9" fill="#6c99dd"/><text x="3.7" y="8.8" font-family="Liberation Sans,sans-serif" font-size="7.6" font-weight="bold" fill="#fff">?</text></svg>
<div class="a" style="left:191px;top:489px;width:591px;height:34px;background:#fff"></div>
<div class="th" style="left:191px;top:489px;width:95.80000000000001px;height:16px"></div>
<div class="t tht" style="left:194.6px;top:491px;letter-spacing:0px">Action</div>
<div class="th" style="left:288px;top:489px;width:63.80000000000001px;height:16px"></div>
<div class="t tht" style="left:291.4px;top:491px;letter-spacing:0.18px">Keyname</div>
<div class="th" style="left:353px;top:489px;width:40.5px;height:16px"></div>
<div class="t tht" style="left:356.4px;top:491px;letter-spacing:0px">Type</div>
<div class="th" style="left:394.6px;top:489px;width:48.89999999999998px;height:16px"></div>
<div class="t tht" style="left:398.0px;top:491px;letter-spacing:0.15px">Unique</div>
<div class="th" style="left:444.6px;top:489px;width:50.39999999999998px;height:16px"></div>
<div class="t tht" style="left:448.0px;top:491px;letter-spacing:0.18px">Packed</div>
<div class="th" style="left:496px;top:489px;width:52.799999999999955px;height:16px"></div>
<div class="t tht" style="left:499.4px;top:491px;letter-spacing:0.33px">Column</div>
<div class="th" style="left:550px;top:489px;width:71.79999999999995px;height:16px"></div>
<div class="t tht" style="left:553.4px;top:491px;letter-spacing:0px">Cardinality</div>
<div class="th" style="left:623px;top:489px;width:59.5px;height:16px"></div>
<div class="t tht" style="left:626.4px;top:491px;letter-spacing:0.12px">Collation</div>
<div class="th" style="left:683.7px;top:489px;width:30.799999999999955px;height:16px"></div>
<div class="t tht" style="left:687.1px;top:491px;letter-spacing:0.1px">Null</div>
<div class="th" style="left:715.7px;top:489px;width:65.5px;height:16px"></div>
<div class="t tht" style="left:719.1px;top:491px;letter-spacing:0.33px">Comment</div>
<svg style="left:194.5px;top:507.5px" width="14" height="14" viewBox="0 0 14 14"><path d="M.8 13.2 L1.8 9.4 L9.6 1.6 Q11.2 .2 12.6 1.6 Q13.8 3 12.4 4.4 L4.6 12.2 Z" fill="#f6d24a" stroke="#c98a2e" stroke-width="1"/><path d="M10 1.6 Q11.4 .6 12.5 1.7 Q13.5 2.9 12.4 4.2 Z" fill="#f5cfae"/><path d="M.8 13.2 L1.6 10.2 L3.8 12.4 Z" fill="#5a3d18"/><path d="M3.4 9 L9.8 2.8" stroke="#fbe88e" stroke-width="1.2"/></svg>
<div class="t lk" style="left:212.5px;top:507.3px">Edit</div>
<svg style="left:239.5px;top:507.5px" width="14" height="14" viewBox="0 0 14 14"><circle cx="7" cy="7" r="6.4" fill="#f0948d"/><circle cx="7" cy="7" r="5" fill="#e2524a"/><rect x="4.2" y="6" width="5.6" height="2.1" rx=".5" fill="#fff"/></svg>
<div class="t lk" style="left:257.5px;top:507.3px">Drop</div>
<div class="t b" style="left:291px;top:507.3px;color:#000;letter-spacing:.5px">PRIMARY</div>
<div class="t" style="left:355.5px;top:507.3px">BTREE</div>
<div class="t" style="left:397.3px;top:507.3px">Yes</div>
<div class="t" style="left:447.8px;top:507.3px">No</div>
<div class="t" style="left:498.8px;top:507.3px">cid</div>
<div class="t" style="left:552.5px;top:507.3px">0</div>
<div class="t" style="left:625.5px;top:507.3px">A</div>
<div class="t" style="left:686.3px;top:507.3px">No</div>
<div class="t" style="left:191.5px;top:544.5px">Create an index on</div>
<div class="sel" style="left:302px;top:541px;width:54px;height:23px"></div>
<div class="t ar" style="left:308px;top:545px;color:#555">1</div>
<div class="t" style="left:365.5px;top:544.5px">columns</div>
<div class="btn" style="left:421px;top:542.4px;width:29.5px;height:19px"></div>
<div class="t ar b" style="left:428px;top:544.7px;color:#111;text-shadow:0 1px 0 #fff">Go</div><!--/MAIN-->
</body></html>
